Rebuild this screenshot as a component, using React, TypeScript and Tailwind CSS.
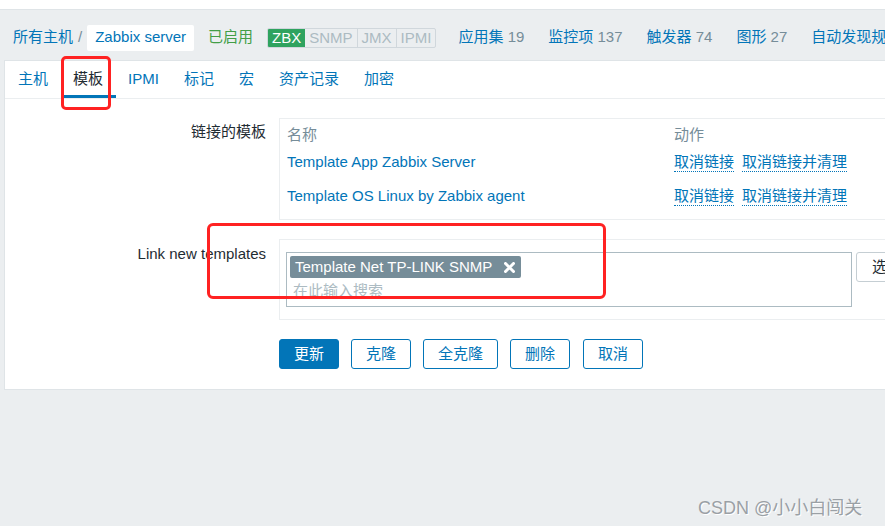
import React from "react";

const tabs = ["主机", "模板", "IPMI", "标记", "宏", "资产记录", "加密"];

const counts = [
  { name: "应用集", n: "19" },
  { name: "监控项", n: "137" },
  { name: "触发器", n: "74" },
  { name: "图形", n: "27" },
];

const linked = ["Template App Zabbix Server", "Template OS Linux by Zabbix agent"];

const UnlinkLinks = () => (
  <div className="flex gap-[8px] whitespace-nowrap">
    <span className="border-b border-dotted border-[#0275b8] leading-[18px] text-[#0275b8]">取消链接</span>
    <span className="border-b border-dotted border-[#0275b8] leading-[18px] text-[#0275b8]">取消链接并清理</span>
  </div>
);

const App = () => {
  return (
    <div className="relative h-[526px] w-[885px] overflow-hidden bg-[#ebeef0] font-['Liberation_Sans','Noto_Sans_CJK_SC',sans-serif] text-[15px] text-[#1f2c33]">
      <div className="h-[10px] border-b border-[#dfe4e7] bg-white" />

      {/* breadcrumb + host status */}
      <div className="flex h-[50px] items-center whitespace-nowrap pl-[13px] pt-[5px] [&>*]:shrink-0">
        <span className="text-[#0275b8]">所有主机</span>
        <span className="mx-[5px] text-[#768d99]">/</span>
        <span className="flex h-[26px] items-center rounded-[2px] bg-white px-[8px] text-[#0275b8]">Zabbix server</span>
        <span className="ml-[14px] text-[#429e47]">已启用</span>
        <div className="ml-[14px] flex h-[20px] overflow-hidden rounded-[2px] border border-[#d0d7dc] text-[15px] leading-[18px]">
          <span className="bg-[#2fa35f] px-[4px] text-white">ZBX</span>
          <span className="border-r border-[#d0d7dc] px-[4px] text-[#acbbc2]">SNMP</span>
          <span className="border-r border-[#d0d7dc] px-[4px] text-[#acbbc2]">JMX</span>
          <span className="px-[4px] text-[#acbbc2]">IPMI</span>
        </div>
        <div className="ml-[22px] flex gap-[24px] [&>*]:shrink-0">
          {counts.map((c) => (
            <span key={c.name}>
              <span className="text-[#0275b8]">{c.name}</span>{" "}
              <span className="text-[#768d99]">{c.n}</span>
            </span>
          ))}
          <span className="text-[#0275b8]">自动发现规则</span>
        </div>
      </div>

      {/* main panel */}
      <div className="ml-[4px] w-[900px] border border-[#dfe4e7] bg-white">
        <div className="flex h-[38px] border-b border-[#ebeef0] pl-[1px]">
          {tabs.map((t) => (
            <div
              key={t}
              className={
                t === "模板"
                  ? "flex h-full items-center border-b-[3px] border-[#0275b8] pl-[12px] pr-[13px] pt-[3px] text-[#1f2c33]"
                  : "flex h-full items-center pl-[12px] pr-[13px] text-[#0275b8]"
              }
            >
              {t}
            </div>
          ))}
        </div>

        <div className="grid grid-cols-[261px_1fr] gap-x-[13px] gap-y-[19px] pb-[20px] pt-[19px]">
          <div className="pt-[3px] text-right">链接的模板</div>
          <div className="w-[640px] border border-[#ebeef0] px-[7px] pb-[6px] pt-[6px]">
            <div className="flex h-[20px] items-center text-[#768d99]">
              <span className="w-[387px]">名称</span>
              <span>动作</span>
            </div>
            {linked.map((l) => (
              <div key={l} className="flex h-[34px] items-center">
                <span className="w-[387px] text-[#0275b8]">{l}</span>
                <UnlinkLinks />
              </div>
            ))}
          </div>

          <div className="pt-[4px] text-right">Link new templates</div>
          <div className="flex w-[640px] items-start gap-[4px] border border-[#ebeef0] px-[6px] py-[12px]">
            <div className="h-[55px] w-[566px] shrink-0 border border-[#acbbc2] px-[3px] pt-[3px]">
              <span className="inline-flex h-[22px] items-center gap-[12px] rounded-[2px] bg-[#768d99] pl-[5px] pr-[6px] text-white">
                Template Net TP-LINK SNMP
                <svg width="11" height="11" viewBox="0 0 11 11">
                  <path d="M1.5 1.5 L9.5 9.5 M9.5 1.5 L1.5 9.5" stroke="white" strokeWidth="3" strokeLinecap="round" />
                </svg>
              </span>
              <div className="pl-[3px] leading-[24px] text-[#acbbc2]">在此输入搜索</div>
            </div>
            <div className="flex h-[30px] shrink-0 items-center whitespace-nowrap rounded-[3px] border border-[#c5ced3] px-[15px]">选择</div>
          </div>

          <div />
          <div className="flex gap-[12px] [&>*]:shrink-0">
            <button className="h-[30px] rounded-[3px] border border-[#0275b8] bg-[#0275b8] px-[14px] text-white">更新</button>
            <button className="h-[30px] rounded-[3px] border border-[#0275b8] px-[14px] text-[#0275b8]">克隆</button>
            <button className="h-[30px] rounded-[3px] border border-[#0275b8] px-[14px] text-[#0275b8]">全克隆</button>
            <button className="h-[30px] rounded-[3px] border border-[#0275b8] px-[14px] text-[#0275b8]">删除</button>
            <button className="ml-[1px] h-[30px] rounded-[3px] border border-[#0275b8] px-[14px] text-[#0275b8]">取消</button>
          </div>
        </div>
      </div>

      {/* red annotations */}
      <div className="absolute left-[61px] top-[56px] h-[54px] w-[50px] rounded-[5px] border-[3px] border-[#ff2222]" />
      <div className="absolute left-[207px] top-[223px] h-[76px] w-[399px] rounded-[6px] border-[3px] border-[#ff2222]" />

      {/* watermark */}
      <div className="absolute left-[698px] top-[495px] text-[18px] text-[#9aa0a5] [text-shadow:1px_1px_0_#ffffff]">
        CSDN @小小白闯关
      </div>
    </div>
  );
};

export default App;
